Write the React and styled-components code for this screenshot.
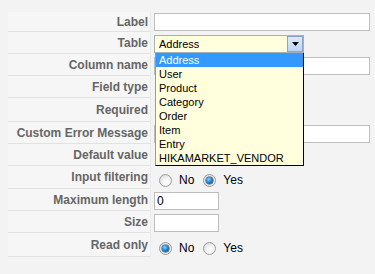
import React from "react";
import styled, { createGlobalStyle } from "styled-components";

const GlobalStyle = createGlobalStyle`
    body {
        margin: 0;
        background: #f3f3f3;
        font-family: "Liberation Sans", Arial, sans-serif;
    }
`

const Form = styled.div`
    padding: 12px 6px 0 8px;
`

const Row = styled.div`
    display: grid;
    grid-template-columns: 143px 1fr;
    height: ${props => props.h || 22}px;
`

const LabelCell = styled.div`
    display: flex;
    align-items: center;
    justify-content: flex-end;
    padding-right: 2px;
    background: #f6f6f6;
    border-bottom: 1px solid #e2e2e2;
    border-right: 1px solid #ebebeb;
    color: #666;
    font-size: 12px;
    font-weight: bold;
    white-space: nowrap;
`

const ValueCell = styled.div`
    position: relative;
    display: flex;
    align-items: flex-start;
    padding-left: 3px;
    padding-top: ${props => props.top ?? 3}px;
`

const TextInput = styled.input`
    box-sizing: border-box;
    width: ${props => props.w || 216}px;
    height: 18px;
    margin: 0;
    padding: 0 2px;
    border: 1px solid #bdbdbd;
    background: #fff;
    font: 12px "Liberation Sans", Arial, sans-serif;
    color: #000;
    outline: none;
`

const SelectWrap = styled.div`
    position: relative;
    width: 150px;
`

const SelectBox = styled.div`
    box-sizing: border-box;
    display: flex;
    align-items: center;
    height: 18px;
    padding-left: 4px;
    border: 1px solid #a9b0b8;
    background: #ffffdd;
    font-size: 11px;
    color: #000;
`

const SelectButton = styled.div`
    position: absolute;
    right: 1px;
    top: 1px;
    box-sizing: border-box;
    width: 16px;
    height: 16px;
    display: flex;
    align-items: center;
    justify-content: center;
    border: 1px solid #8aa6c4;
    background: linear-gradient(#dcebfb, #bcd5f0);
`

const List = styled.ul`
    position: absolute;
    z-index: 5;
    top: 100%;
    left: 1px;
    right: 0;
    margin: 0;
    padding: 0;
    list-style: none;
    background: #ffffdd;
    border-left: 1px solid #9a9a9a;
    border-right: 1px solid #000;
    border-bottom: 1px solid #000;
`

const Option = styled.li`
    height: 14px;
    line-height: 14px;
    padding-left: 3px;
    font-size: 11px;
    color: ${props => props.active ? "#fff" : "#000"};
    background: ${props => props.active ? "#3399ff" : "transparent"};
    white-space: nowrap;
`

const RadioGroup = styled.div`
    display: flex;
    align-items: center;
    padding-left: 5px;
    font-size: 12px;
    color: #000;
`

const RadioLabel = styled.label`
    display: flex;
    align-items: center;
    gap: 7px;
    margin-right: 9px;
`

const Radio = styled.span`
    position: relative;
    box-sizing: border-box;
    width: 13px;
    height: 13px;
    border-radius: 50%;
    border: 1px solid #9c9c9c;
    background: radial-gradient(circle at 60% 65%, #ffffff 0%, #f2f2f2 45%, #cfcfcf 100%);

    &::after {
        content: "";
        display: ${props => props.checked ? "block" : "none"};
        position: absolute;
        left: 2px;
        top: 2px;
        width: 7px;
        height: 7px;
        border-radius: 50%;
        background: radial-gradient(circle at 40% 35%, #8fd0ff 0%, #1f86d0 45%, #0b3f73 100%);
        box-shadow: 0 0 0 0.5px #1c3d5e;
    }
`

function YesNo({ value }) {
    return (
        <RadioGroup>
            <RadioLabel><Radio checked={value === "no"} />No</RadioLabel>
            <RadioLabel><Radio checked={value === "yes"} />Yes</RadioLabel>
        </RadioGroup>
    )
}

const tables = ["Address", "User", "Product", "Category", "Order", "Item", "Entry", "HIKAMARKET_VENDOR"];

export default function App() {
    return (
        <>
            <GlobalStyle />
            <Form>
                <Row h={20}>
                    <LabelCell>Label</LabelCell>
                    <ValueCell top={1}><TextInput /></ValueCell>
                </Row>
                <Row>
                    <LabelCell>Table</LabelCell>
                    <ValueCell>
                        <SelectWrap>
                            <SelectBox>Address</SelectBox>
                            <SelectButton>
                                <svg width="7" height="4" viewBox="0 0 7 4">
                                    <path d="M0 0h7L3.5 4z" fill="#000" />
                                </svg>
                            </SelectButton>
                            <List>
                                {tables.map((t, i) => (
                                    <Option key={t} active={i === 0}>{t}</Option>
                                ))}
                            </List>
                        </SelectWrap>
                    </ValueCell>
                </Row>
                <Row>
                    <LabelCell>Column name</LabelCell>
                    <ValueCell><TextInput /></ValueCell>
                </Row>
                <Row>
                    <LabelCell>Field type</LabelCell>
                    <ValueCell />
                </Row>
                <Row h={24}>
                    <LabelCell>Required</LabelCell>
                    <ValueCell />
                </Row>
                <Row>
                    <LabelCell>Custom Error Message</LabelCell>
                    <ValueCell><TextInput /></ValueCell>
                </Row>
                <Row>
                    <LabelCell>Default value</LabelCell>
                    <ValueCell />
                </Row>
                <Row h={23}>
                    <LabelCell>Input filtering</LabelCell>
                    <ValueCell top={7}><YesNo value="yes" /></ValueCell>
                </Row>
                <Row>
                    <LabelCell>Maximum length</LabelCell>
                    <ValueCell><TextInput w={65} defaultValue="0" /></ValueCell>
                </Row>
                <Row>
                    <LabelCell>Size</LabelCell>
                    <ValueCell><TextInput w={65} /></ValueCell>
                </Row>
                <Row h={24}>
                    <LabelCell>Read only</LabelCell>
                    <ValueCell top={8}><YesNo value="no" /></ValueCell>
                </Row>
            </Form>
        </>
    )
}
